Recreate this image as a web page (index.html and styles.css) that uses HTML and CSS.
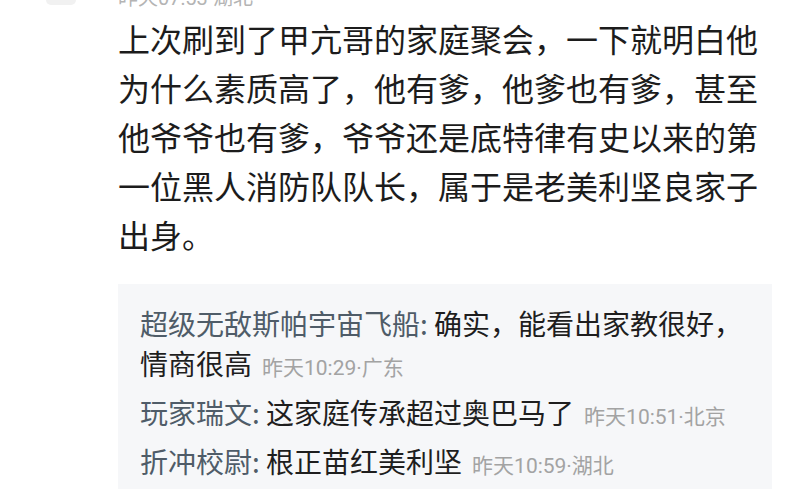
FILE: index.html
```html
<!DOCTYPE html>
<html lang="zh-CN">
<head>
    <meta charset="UTF-8">
    <meta name="viewport" content="width=device-width, initial-scale=1.0">
    <title>评论</title>
    <link rel="stylesheet" href="styles.css">
</head>
<body>
    <div class="avatar-edge"></div>
    <article class="post">
        <div class="meta">昨天07:53·湖北</div>
        <p class="content">上次刷到了甲亢哥的家庭聚会，一下就明白他为什么素质高了，他有爹，他爹也有爹，甚至他爷爷也有爹，爷爷还是底特律有史以来的第一位黑人消防队队长，属于是老美利坚良家子出身。</p>

        <section class="comments">
            <p class="comment"><span class="name">超级无敌斯帕宇宙飞船: </span>确实，能看出家教很好，情商很高<span class="time">昨天10:29·广东</span></p>
            <p class="comment"><span class="name">玩家瑞文: </span>这家庭传承超过奥巴马了<span class="time">昨天10:51·北京</span></p>
            <p class="comment"><span class="name">折冲校尉: </span>根正苗红美利坚<span class="time">昨天10:59·湖北</span></p>
        </section>
    </article>
</body>
</html>
```

FILE: styles.css
```css
body {
    margin: 0;
    padding: 0;
    background-color: #fff;
    font-family: "Noto Sans CJK SC", "Noto Sans", sans-serif;
    color: #1c1c1c;
    overflow: hidden;
}
.avatar-edge {
    width: 30px;
    height: 5px;
    margin-left: 46px;
    margin-bottom: -5px;
    background-color: #f1f1f1;
    border-radius: 0 0 15px 15px;
}
.post {
    padding: 0 28px 0 118px;
}
.meta {
    height: 20px;
    margin-top: -17px;
    font-family: Roboto, "Noto Sans CJK SC", sans-serif;
    font-size: 20px;
    line-height: 20px;
    color: #b4b4b4;
}
.content {
    margin: 6px 0 25px;
    font-size: 32px;
    line-height: 49px;
}
.comments {
    background-color: #f6f7f9;
    padding: 19px 22px 3px;
}
.comment {
    margin: 0 0 4px;
    font-size: 28px;
    line-height: 40px;
    color: #1e1e1e;
}
.comment:last-child {
    margin-bottom: 0;
}
.name {
    color: #4f5c68;
}
.time {
    margin-left: 10px;
    font-family: Roboto, "Noto Sans CJK SC", sans-serif;
    font-size: 21px;
    color: #a3a3a3;
}
```
